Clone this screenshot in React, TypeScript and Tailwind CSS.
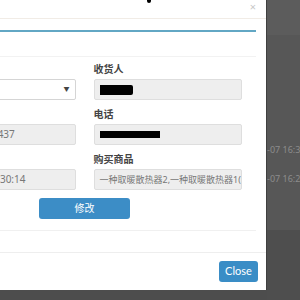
import React from "react";

const cjk = { fontFamily: '"Noto Sans", "Noto Sans CJK SC", sans-serif' };

function Field({ label, children }: { label?: string; children: React.ReactNode }) {
  return (
    <div>
      <div className="h-[10px] text-[10px] leading-[10px] font-semibold text-[#444] mb-[5px] whitespace-nowrap">{label}</div>
      {children}
    </div>
  );
}

function ReadBox({ children, small }: { children?: React.ReactNode; small?: boolean }) {
  return (
    <div
      className={
        "h-[21px] bg-[#eeeeee] border border-[#dedede] rounded-[2px] flex items-center pl-[5px] overflow-hidden whitespace-nowrap text-[#777] " +
        (small ? "text-[9px]" : "text-[10px]")
      }
    >
      {children}
    </div>
  );
}

export default function App() {
  return (
    <div className="w-[300px] h-[300px] overflow-hidden bg-[#4d4d4d] flex items-start" style={cjk}>
      {/* modal */}
      <div className="ml-[-97px] w-[364px] h-[290px] shrink-0 bg-white flex flex-col border-r border-[#3f3f3f]">
        <div className="h-[19px] border-b border-[#f1ece6] flex items-start">
          <div className="ml-[244px] w-[4px] h-[3px] rounded-b-full bg-black" />
          <div className="ml-auto mr-[10px] mt-[1px] text-[11px] leading-[11px] text-[#c8c8c8]">×</div>
        </div>

        <div className="px-[10px] pt-[11px] pb-[21px]">
          <div className="border-t-2 border-[#62a7c4]" />
          <div className="border-b border-[#f0f0f0]">
            <div className="h-[25px] border-b border-[#f2f2f2]" />
            <div className="px-[14px] pt-[7px] pb-[11px]">
              <div className="grid grid-cols-2 gap-x-[18px] gap-y-[9px]">
                <Field>
                  <div className="h-[21px] bg-white border border-[#d5d5d5] rounded-[2px] flex items-center justify-end pr-[5px]">
                    <span className="text-[6px] text-[#444]">▼</span>
                  </div>
                </Field>
                <Field label="收货人">
                  <ReadBox>
                    <div className="w-[33px] h-[10px] bg-black rounded-r-[2px]" />
                  </ReadBox>
                </Field>
                <Field>
                  <div className="h-[21px] bg-[#eeeeee] border border-[#dedede] rounded-[2px] flex items-center pl-[1px] overflow-hidden whitespace-nowrap text-[10px] text-[#777]">
                    201901071630437
                  </div>
                </Field>
                <Field label="电话">
                  <ReadBox>
                    <div className="w-[60px] h-[7px] bg-black" />
                  </ReadBox>
                </Field>
                <Field>
                  <div className="h-[21px] bg-[#eeeeee] border border-[#dedede] rounded-[2px] flex items-center pl-[3px] overflow-hidden whitespace-nowrap text-[10px] text-[#777]">
                    2019-01-07 16:30:14
                  </div>
                </Field>
                <Field label="购买商品">
                  <ReadBox small>一种取暖散热器2,一种取暖散热器1(</ReadBox>
                </Field>
              </div>
              <div className="mt-[8px] mx-auto w-[91px] h-[21px] rounded-[3px] bg-[#3c8dc6] text-white text-[10px] flex items-center justify-center">
                修改
              </div>
            </div>
          </div>
        </div>

        <div className="border-t border-[#eeeeee] flex justify-end pt-[8px] pr-[8px]">
          <div className="w-[39px] h-[21px] rounded-[3px] bg-[#3a8dc6] text-white text-[11px] flex items-center justify-center" style={{ fontFamily: 'Lato, "Noto Sans", sans-serif' }}>
            Close
          </div>
        </div>
      </div>

      {/* page behind overlay */}
      <div className="flex-1 h-[300px] flex flex-col overflow-hidden whitespace-nowrap text-[9px] text-[#8c8c8c]">
        <div className="h-[35px] bg-[#5c5c5c]" />
        <div className="h-[195px] bg-[#575757] flex flex-col pt-[100px]">
          <div className="h-[29px] flex items-center">-07 16:3</div>
          <div className="h-[29px] flex items-center">-07 16:2</div>
        </div>
        <div className="flex-1 bg-[#4e4e4e]" />
      </div>
    </div>
  );
}
